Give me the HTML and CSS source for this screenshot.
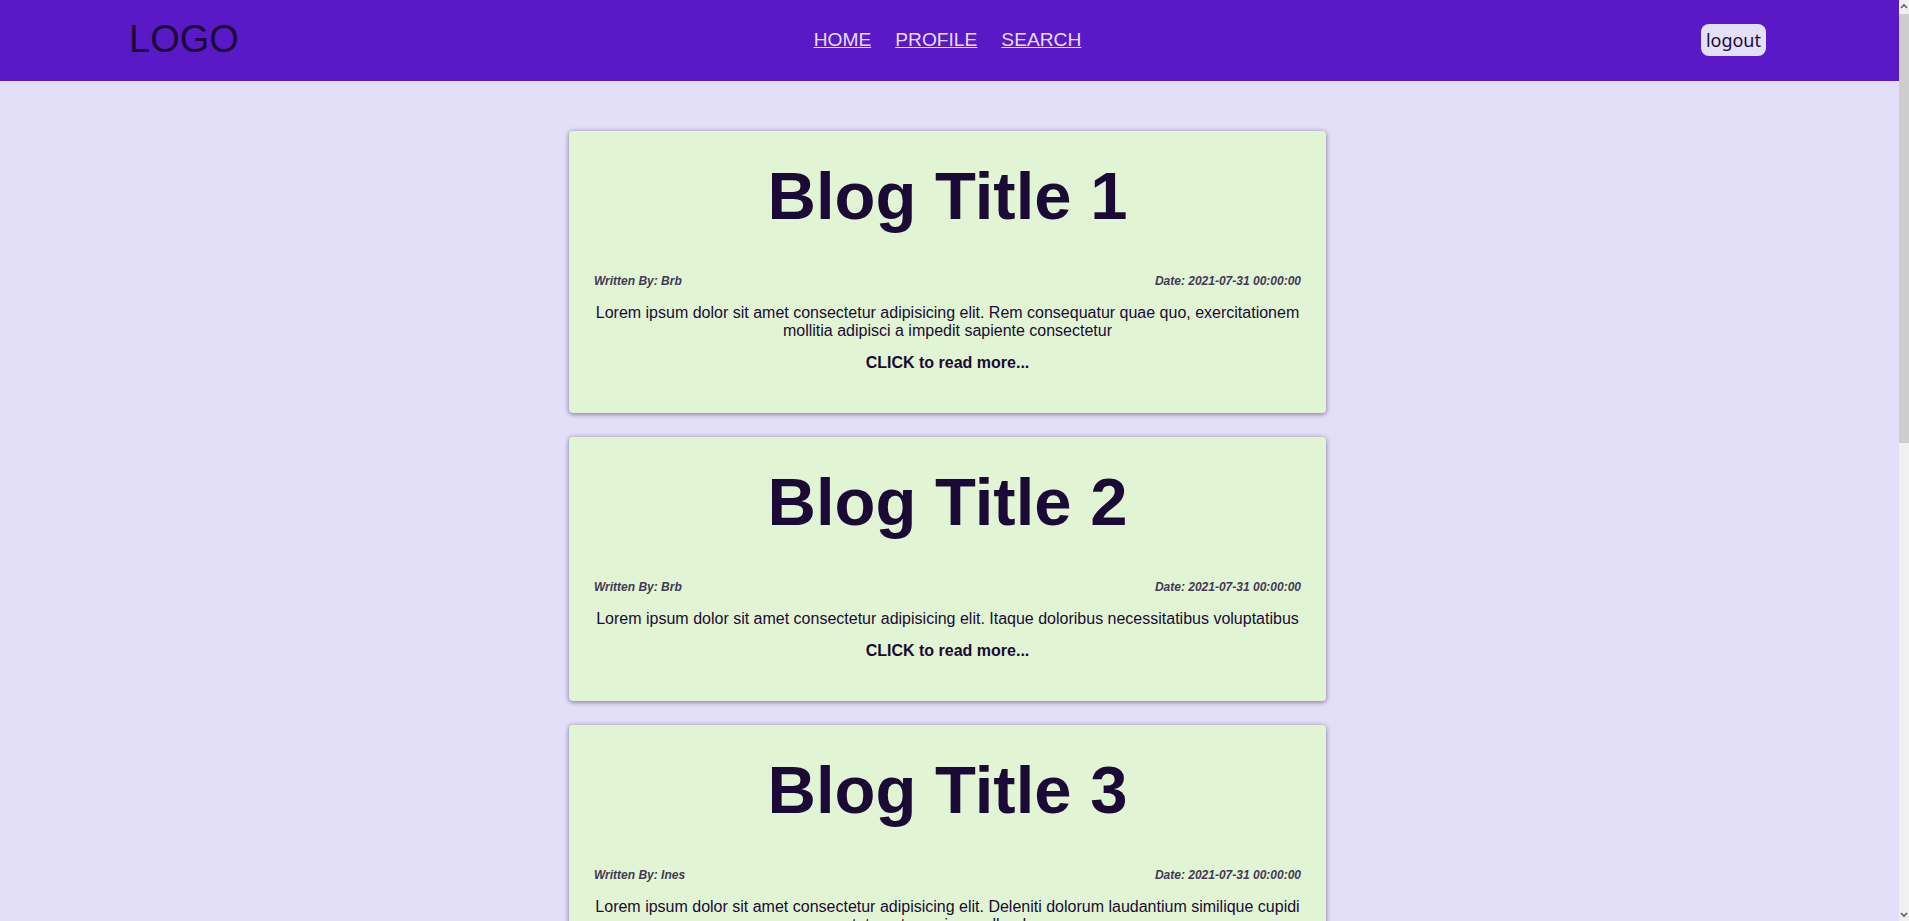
FILE: index.html
```html
<!DOCTYPE html>
<html lang="en">
<head>
<meta charset="utf-8">
<title>Blog</title>
<link rel="stylesheet" href="styles.css">
</head>
<body>
<header class="site-header">
  <div class="logo">LOGO</div>
  <nav class="nav">
    <a href="#" class="nav-link">HOME</a>
    <a href="#" class="nav-link">PROFILE</a>
    <a href="#" class="nav-link">SEARCH</a>
  </nav>
  <div class="header-right">
    <button class="logout">logout</button>
  </div>
</header>
<main class="feed">
  <article class="card">
    <h1 class="card-title">Blog Title 1</h1>
    <div class="meta"><span>Written By: Brb</span><span>Date: 2021-07-31 00:00:00</span></div>
    <p class="excerpt">Lorem ipsum dolor sit amet consectetur adipisicing elit. Rem consequatur quae quo, exercitationem mollitia adipisci a impedit sapiente consectetur</p>
    <p class="more">CLICK to read more...</p>
  </article>
  <article class="card">
    <h1 class="card-title">Blog Title 2</h1>
    <div class="meta"><span>Written By: Brb</span><span>Date: 2021-07-31 00:00:00</span></div>
    <p class="excerpt">Lorem ipsum dolor sit amet consectetur adipisicing elit. Itaque doloribus necessitatibus voluptatibus</p>
    <p class="more">CLICK to read more...</p>
  </article>
  <article class="card">
    <h1 class="card-title">Blog Title 3</h1>
    <div class="meta"><span>Written By: Ines</span><span>Date: 2021-07-31 00:00:00</span></div>
    <p class="excerpt">Lorem ipsum dolor sit amet consectetur adipisicing elit. Deleniti dolorum laudantium similique cupidi tate natus quis repellendus</p>
    <p class="more">CLICK to read more...</p>
  </article>
  <article class="card">
    <h1 class="card-title">Blog Title 4</h1>
    <div class="meta"><span>Written By: Ines</span><span>Date: 2021-07-31 00:00:00</span></div>
    <p class="excerpt">Lorem ipsum dolor sit amet consectetur adipisicing elit. Quasi eveniet porro accusamus</p>
    <p class="more">CLICK to read more...</p>
  </article>
  <article class="card">
    <h1 class="card-title">Blog Title 5</h1>
    <div class="meta"><span>Written By: Brb</span><span>Date: 2021-07-31 00:00:00</span></div>
    <p class="excerpt">Lorem ipsum dolor sit amet consectetur adipisicing elit. Voluptates nihil aliquid dolorem</p>
    <p class="more">CLICK to read more...</p>
  </article>
  <article class="card">
    <h1 class="card-title">Blog Title 6</h1>
    <div class="meta"><span>Written By: Ines</span><span>Date: 2021-07-31 00:00:00</span></div>
    <p class="excerpt">Lorem ipsum dolor sit amet consectetur adipisicing elit. Ab magnam sequi facere</p>
    <p class="more">CLICK to read more...</p>
  </article>
</main>
<div class="scrollbar" aria-hidden="true">
  <div class="sb-btn">
    <svg width="10" height="14" viewBox="0 0 10 14"><path d="M2 8 L5 5 L8 8" fill="none" stroke="#606060" stroke-width="1.6"/></svg>
  </div>
  <div class="sb-track"><div class="sb-thumb"></div></div>
  <div class="sb-btn">
    <svg width="10" height="14" viewBox="0 0 10 14"><path d="M2 6 L5 9 L8 6" fill="none" stroke="#606060" stroke-width="1.6"/></svg>
  </div>
</div>
</body>
</html>
```

FILE: styles.css
```css
html {
  background: #e3dff8;
}

body {
  margin: 0 10px 0 0;
  background: #e3dff8;
  font-family: "Liberation Sans", Arial, sans-serif;
  color: #1b0a35;
}

.site-header {
  height: 81px;
  box-sizing: border-box;
  padding: 0 133px 2px 129px;
  background: #5a19c7;
  display: grid;
  grid-template-columns: 1fr auto 1fr;
  align-items: center;
}

.logo {
  font-size: 38px;
  color: #1b0a35;
  line-height: normal;
}

.nav {
  display: flex;
  gap: 24px;
}

.nav-link {
  font-size: 19.2px;
  color: #e3dff8;
  text-decoration: underline;
}

.header-right {
  display: flex;
  justify-content: flex-end;
}

.logout {
  font-family: "Noto Sans", "Open Sans", sans-serif;
  font-size: 18px;
  line-height: normal;
  padding: 4px 5px;
  border: none;
  border-radius: 8px;
  background: #e3dff8;
  color: #1b0a35;
}

.feed {
  display: flex;
  flex-direction: column;
  align-items: center;
  gap: 24px;
  padding: 50px 4px 26px 0;
}

.card {
  width: 757px;
  box-sizing: border-box;
  padding: 26px 25px 41px;
  background: #e1f5d4;
  border-radius: 4px;
  box-shadow: 0 1px 5px rgba(30, 10, 60, 0.55);
  text-align: center;
}

.card-title {
  margin: 0;
  font-size: 67px;
  font-weight: bold;
  line-height: 78px;
  color: #1b0a35;
}

.meta {
  margin-top: 39px;
  display: flex;
  justify-content: space-between;
  font-size: 12px;
  font-style: italic;
  font-weight: bold;
  color: #413a55;
}

.excerpt {
  margin: 16px 0 0;
  font-size: 16px;
  color: #1b0a35;
}

.more {
  margin: 14px 0 0;
  font-size: 16px;
  font-weight: bold;
  color: #1b0a35;
}

.scrollbar {
  position: fixed;
  top: 0;
  right: 0;
  width: 10px;
  height: 100vh;
  display: flex;
  flex-direction: column;
  background: #f0f0f0;
}

.sb-btn {
  height: 14px;
  flex: none;
}

.sb-btn svg {
  display: block;
}

.sb-track {
  flex: 1;
}

.sb-thumb {
  height: 429px;
  background: #cdcdcd;
}
```
